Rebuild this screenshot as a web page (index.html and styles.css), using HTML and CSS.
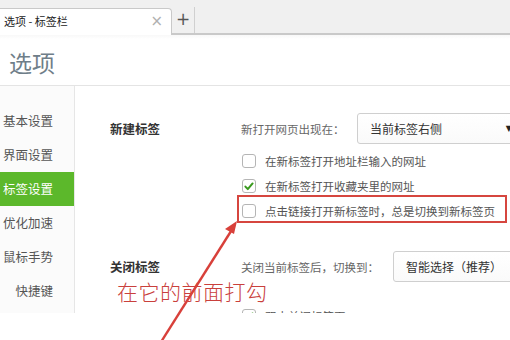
FILE: index.html
```html
<!DOCTYPE html>
<html lang="zh-CN">
<head>
<meta charset="utf-8">
<title>选项 - 标签栏</title>
<link rel="stylesheet" href="styles.css">
</head>
<body>
<div class="page">
  <div class="window">
    <div class="tabbar">
      <div class="tab">
        <span class="tab-title">选项 - 标签栏</span>
        <span class="tab-close">×</span>
      </div>
      <div class="newtab">+</div>
    </div>
    <div class="header"><h1 class="title">选项</h1></div>
    <div class="main">
      <nav class="sidebar">
        <div class="nav-item">基本设置</div>
        <div class="nav-item">界面设置</div>
        <div class="nav-item active">标签设置</div>
        <div class="nav-item">优化加速</div>
        <div class="nav-item">鼠标手势</div>
        <div class="nav-item">快捷键</div>
      </nav>
      <div class="content">
        <section class="section first">
          <div class="section-label">新建标签</div>
          <div class="section-body">
            <div class="select-row">
              <span class="field-label">新打开网页出现在：</span>
              <div class="select"><span>当前标签右侧</span><span class="caret">▼</span></div>
            </div>
            <label class="check-row"><span class="box"></span><span>在新标签打开地址栏输入的网址</span></label>
            <label class="check-row"><span class="box checked"><svg viewBox="0 0 13 13" width="13" height="13"><path d="M2.6 6.6 L5.2 9.3 L10.4 3.2" fill="none" stroke="#3a9a1e" stroke-width="2.2" stroke-linecap="round" stroke-linejoin="round"/></svg></span><span>在新标签打开收藏夹里的网址</span></label>
            <label class="check-row"><span class="box"></span><span>点击链接打开新标签时，总是切换到新标签页</span></label>
          </div>
        </section>
        <section class="section second">
          <div class="section-label">关闭标签</div>
          <div class="section-body">
            <div class="select-row">
              <span class="field-label wide">关闭当前标签后，切换到：</span>
              <div class="select"><span>智能选择（推荐）</span></div>
            </div>
            <label class="check-row cut"><span class="box checked"><svg viewBox="0 0 13 13" width="13" height="13"><path d="M2.6 6.6 L5.2 9.3 L10.4 3.2" fill="none" stroke="#3a9a1e" stroke-width="2.2" stroke-linecap="round" stroke-linejoin="round"/></svg></span><span>双击关闭标签页</span></label>
          </div>
        </section>
      </div>
    </div>
  </div>
  <div class="highlight"></div>
  <div class="note">在它的前面打勾</div>
  <svg class="arrow" width="510" height="340" viewBox="0 0 510 340">
    <line x1="161" y1="342" x2="233" y2="228" stroke="#d8403a" stroke-width="2.4"/>
    <polygon points="237,221 225,229 234,234" fill="#d8403a"/>
  </svg>
</div>
</body>
</html>
```

FILE: styles.css
```css
* { box-sizing: border-box; }
html, body { margin: 0; padding: 0; background: #fff; }
body {
  font-family: "Microsoft YaHei", "Noto Sans CJK SC", "Noto Sans", sans-serif;
  width: 510px;
  height: 340px;
  overflow: hidden;
}
.page { position: relative; width: 510px; height: 340px; }
.window { height: 313px; overflow: hidden; }

.tabbar {
  height: 35px;
  background: #f0f0f0;
  border-bottom: 2px solid #c9c9c9;
  display: flex;
  align-items: flex-end;
}
.tab {
  width: 172px;
  height: 27px;
  margin-bottom: -2px;
  background: #fff;
  border: 1px solid #c9c9c9;
  border-left: none;
  border-bottom: none;
  border-top-right-radius: 4px;
  display: flex;
  align-items: center;
  justify-content: space-between;
  padding: 0 8px 2px 4px;
}
.tab-title { font-size: 11px; color: #222; white-space: nowrap; }
.tab-close { font-size: 15px; color: #b0b0b0; font-family: "DejaVu Sans", sans-serif; line-height: 1; }
.newtab {
  width: 23px;
  height: 26px;
  border-right: 1px solid #d0d0d0;
  display: flex;
  align-items: center;
  justify-content: center;
  font-size: 17px;
  color: #555;
  font-family: "DejaVu Sans", sans-serif;
  padding-bottom: 3px;
}

.header {
  height: 51px;
  border-bottom: 1px solid #e4e4e4;
  background: linear-gradient(#f8f8f8 0, #fff 4px);
  display: flex;
  align-items: center;
  padding-left: 9px;
}
.title {
  margin: 0;
  font-size: 23px;
  font-weight: normal;
  color: #6f7e89;
  padding-top: 4px;
}

.main { display: flex; height: 230px; }
.sidebar {
  width: 75px;
  border-right: 1px solid #e6e6e6;
  background: #fbfbfb;
  padding-top: 18px;
  flex: none;
}
.nav-item {
  height: 34px;
  line-height: 34px;
  font-size: 12.5px;
  color: #555;
  text-align: right;
  padding-right: 21px;
  white-space: nowrap;
}
.nav-item.active { background: #5cb82b; color: #fff; }

.content { flex: 1; min-width: 0; padding-left: 35px; color: #555; }
.section { display: flex; }
.section.first { padding-top: 27px; }
.section.second { padding-top: 28px; }
.section-label {
  width: 131px;
  flex: none;
  font-size: 12.5px;
  font-weight: bold;
  color: #333;
  line-height: 31px;
  white-space: nowrap;
}
.section-body { flex: 1; min-width: 0; }
.select-row { display: flex; align-items: center; height: 31px; }
.field-label { font-size: 11.5px; color: #666; width: 116px; flex: none; white-space: nowrap; }
.field-label.wide { width: 152px; }
.select {
  flex: 1;
  height: 31px;
  margin-right: -12px;
  border: 1px solid #cfcfcf;
  border-radius: 3px;
  background: linear-gradient(#fff, #fafafa);
  display: flex;
  align-items: center;
  justify-content: space-between;
  padding: 0 9px 0 12px;
  font-size: 12px;
  color: #333;
  white-space: nowrap;
  overflow: hidden;
}
.caret { font-size: 8px; color: #222; font-family: "DejaVu Sans", sans-serif; }

.check-row {
  display: flex;
  align-items: center;
  height: 25px;
  font-size: 11.5px;
  color: #555;
  white-space: nowrap;
}
.first .check-row:first-of-type { margin-top: 4px; }
.box {
  width: 14px;
  height: 14px;
  border: 1px solid #b5b5b5;
  border-radius: 3px;
  background: #fff;
  margin: 0 9px 0 1px;
  flex: none;
  display: flex;
}
.check-row.cut { margin-top: 21px; }

.highlight {
  position: absolute;
  left: 237px;
  top: 195px;
  width: 270px;
  height: 28px;
  border: 2px solid #d6463f;
}
.note {
  position: absolute;
  left: 117px;
  top: 276px;
  font-size: 21px;
  color: #c9403c;
  letter-spacing: 0.5px;
  line-height: 30px;
  font-family: "Noto Sans CJK SC", sans-serif;
  font-weight: 300;
  white-space: nowrap;
}
.arrow { position: absolute; left: 0; top: 0; pointer-events: none; }
```
